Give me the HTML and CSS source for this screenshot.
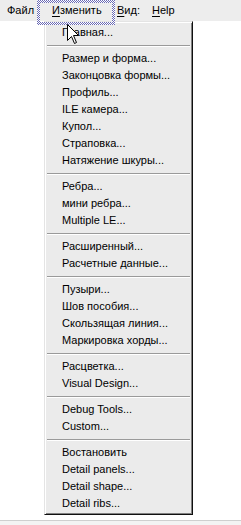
FILE: index.html
```html
<!DOCTYPE html>
<html lang="ru">
<head>
<meta charset="utf-8">
<title>Menu</title>
<link rel="stylesheet" href="styles.css">
</head>
<body>
<div class="bar">
  <span class="mi mi-file">Файл</span>
  <span class="mi mi-edit"><u>И</u>зменить</span>
  <span class="mi mi-view"><u>В</u>ид:</span>
  <span class="mi mi-help"><u>H</u>elp</span>
</div>
<div class="focus"></div>
<div class="stage">
  <div class="menu">
    <div class="item">Главная...</div>
    <div class="sep"></div>
    <div class="item">Размер и форма...</div>
    <div class="item">Законцовка формы...</div>
    <div class="item">Профиль...</div>
    <div class="item">ILE камера...</div>
    <div class="item">Купол...</div>
    <div class="item">Страповка...</div>
    <div class="item">Натяжение шкуры...</div>
    <div class="sep"></div>
    <div class="item">Ребра...</div>
    <div class="item">мини ребра...</div>
    <div class="item">Multiple LE...</div>
    <div class="sep"></div>
    <div class="item">Расширенный...</div>
    <div class="item">Расчетные данные...</div>
    <div class="sep"></div>
    <div class="item">Пузыри...</div>
    <div class="item">Шов пособия...</div>
    <div class="item">Скользящая линия...</div>
    <div class="item">Маркировка хорды...</div>
    <div class="sep"></div>
    <div class="item">Расцветка...</div>
    <div class="item">Visual Design...</div>
    <div class="sep"></div>
    <div class="item">Debug Tools...</div>
    <div class="item">Custom...</div>
    <div class="sep"></div>
    <div class="item">Востановить</div>
    <div class="item">Detail panels...</div>
    <div class="item">Detail shape...</div>
    <div class="item">Detail ribs...</div>
  </div>
  <svg class="cursor" width="13" height="22" viewBox="0 0 13 22">
    <path d="M0.5 0.5 L0.5 16.5 L4.5 12.5 L7.5 19.5 L9.5 18.5 L6.5 11.5 L11.5 11.5 Z" fill="#fff" stroke="#000" stroke-width="1" stroke-linejoin="miter"/>
  </svg>
</div>
<div class="footer"></div>
</body>
</html>
```
FILE: styles.css
```css
html, body {
  margin: 0;
  padding: 0;
  background: #ffffff;
  overflow: hidden;
}
body {
  width: 241px;
  height: 525px;
  position: relative;
  font-family: "Liberation Sans", Arial, sans-serif;
  font-size: 11px;
  color: #000;
}
.bar {
  height: 21px;
  background: #ededed;
  display: flex;
  align-items: center;
}
.mi {
  display: block;
  box-sizing: border-box;
  line-height: 21px;
  white-space: nowrap;
}
.mi u {
  text-decoration: underline;
  text-underline-offset: 2px;
}
.mi-file { width: 37px; padding-left: 7px; }
.mi-edit { width: 78px; padding-left: 15px; }
.mi-view { width: 35px; padding-left: 2px; }
.mi-help { padding-left: 2px; }

.focus {
  position: absolute;
  left: 37px;
  top: 0;
  width: 78px;
  height: 25px;
  box-sizing: border-box;
  padding: 3px;
  z-index: 5;
  background: repeating-conic-gradient(#6a6ab4 0 25%, #ffffff 0 50%) 0 0 / 2px 2px;
  -webkit-mask: linear-gradient(#000 0 0) content-box, linear-gradient(#000 0 0);
  -webkit-mask-composite: xor;
  mask: linear-gradient(#000 0 0) content-box exclude, linear-gradient(#000 0 0);
}

.stage {
  position: relative;
  padding-left: 44px;
}
.menu {
  width: 149px;
  box-sizing: border-box;
  background: #ebebeb;
  border: 1px solid;
  border-color: #e4e4e4 #101010 #101010 #e4e4e4;
  box-shadow: inset 1px 1px #ffffff, inset -1px -1px #808080;
  padding: 2px;
}
.item {
  height: 17px;
  line-height: 17px;
  padding-left: 15px;
  white-space: nowrap;
}
.sep {
  height: 9px;
  box-sizing: border-box;
  padding-top: 4px;
}
.sep::before {
  content: "";
  display: block;
  height: 1px;
  background: #9a9a9a;
  border-bottom: 1px solid #ffffff;
}
.cursor {
  position: absolute;
  left: 67px;
  top: 3px;
  z-index: 6;
}
.footer {
  margin-top: 5px;
  height: 5px;
  border-top: 1px solid #cfcfcf;
  background: #f3f3f3;
}
```
